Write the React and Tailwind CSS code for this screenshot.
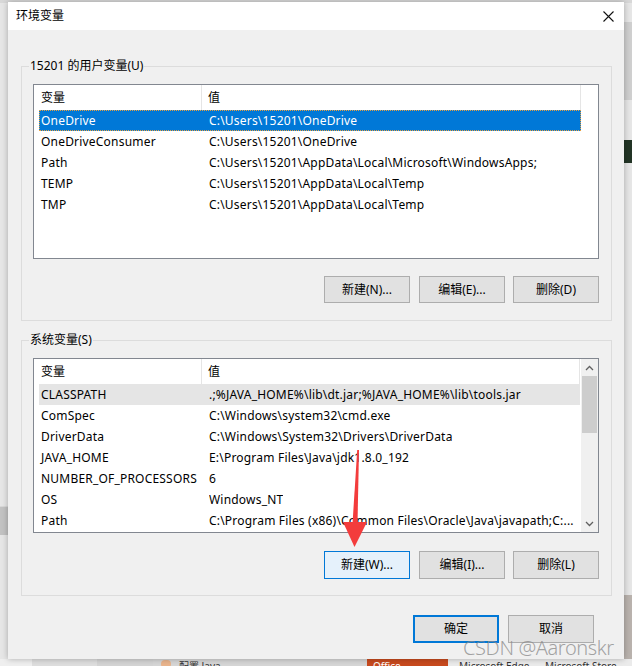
import React from "react";

const userVars = [
  ["OneDrive", "C:\\Users\\15201\\OneDrive"],
  ["OneDriveConsumer", "C:\\Users\\15201\\OneDrive"],
  ["Path", "C:\\Users\\15201\\AppData\\Local\\Microsoft\\WindowsApps;"],
  ["TEMP", "C:\\Users\\15201\\AppData\\Local\\Temp"],
  ["TMP", "C:\\Users\\15201\\AppData\\Local\\Temp"],
];

const sysVars = [
  ["CLASSPATH", ".;%JAVA_HOME%\\lib\\dt.jar;%JAVA_HOME%\\lib\\tools.jar"],
  ["ComSpec", "C:\\Windows\\system32\\cmd.exe"],
  ["DriverData", "C:\\Windows\\System32\\Drivers\\DriverData"],
  ["JAVA_HOME", "E:\\Program Files\\Java\\jdk1.8.0_192"],
  ["NUMBER_OF_PROCESSORS", "6"],
  ["OS", "Windows_NT"],
  ["Path", "C:\\Program Files (x86)\\Common Files\\Oracle\\Java\\javapath;C:..."],
];

function Button({ children, focused, primary, className = "" }) {
  let look = "bg-[#e1e1e1] border border-[#adadad]";
  if (focused) look = "bg-[#e5f1fb] border border-[#0078d7]";
  if (primary) look = "bg-[#e1e1e1] border-2 border-[#0078d7]";
  return (
    <div
      className={`w-[86px] h-[27px] flex items-center justify-center leading-none ${look} ${className}`}
    >
      {children}
    </div>
  );
}

function ListHeader({ valueWidth }) {
  return (
    <div className="flex h-[25px] items-center shrink-0">
      <div className="w-[168px] h-full pl-[7px] flex items-center border-r border-[#e5e5e5]">
        变量
      </div>
      <div
        className="h-full pl-[6px] flex items-center border-r border-[#e5e5e5]"
        style={{ width: valueWidth }}
      >
        值
      </div>
    </div>
  );
}

function Row({ name, value, variant, width }) {
  let look = "";
  if (variant === "selected")
    look = "bg-[#0078d7] text-white outline outline-1 outline-dotted outline-[#e8a040] -outline-offset-1";
  if (variant === "hover") look = "bg-[#e5e5e5]";
  return (
    <div
      className={`ml-[5px] h-[21px] flex items-center whitespace-nowrap tracking-[0.2px] ${look}`}
      style={{ width }}
    >
      <div className="w-[170px] pl-[2px] shrink-0">{name}</div>
      <div className="overflow-hidden">{value}</div>
    </div>
  );
}

function GroupBox({ title, className = "", children }) {
  return (
    <div className={`relative border border-[#dcdcdc] ${className}`}>
      <span className="absolute -top-[9px] left-[7px] bg-[#f0f0f0] px-[1px] leading-[16px]">
        {title}
      </span>
      {children}
    </div>
  );
}

function Chevron({ up }) {
  return (
    <svg width="9" height="6" viewBox="0 0 9 6" className="shrink-0">
      <path
        d={up ? "M1 5 L4.5 1.5 L8 5" : "M1 1 L4.5 4.5 L8 1"}
        fill="none"
        stroke="#606060"
        strokeWidth="1.3"
      />
    </svg>
  );
}

export default function App() {
  return (
    <div className="relative w-[632px] h-[666px] overflow-hidden bg-[#e6e6e6] text-[12px] text-black font-['Noto_Sans','Noto_Sans_CJK_SC',sans-serif]">
      {/* desktop behind the dialog */}
      <div className="absolute left-0 top-0 w-[632px] h-[3px] bg-[#d8d8d8]" />
      <div className="absolute left-0 top-[506px] w-[8px] h-[29px] bg-[#c2c2c2] border-t border-[#d8d8d8]" />
      <div className="absolute left-[624px] top-[22px] w-[8px] h-[78px] bg-[#cfcfcf]" />
      <div className="absolute left-[624px] top-[140px] w-[8px] h-[23px] bg-[#233526]" />
      <div className="absolute left-[624px] top-[595px] w-[8px] h-[71px] bg-[#b9b2ad]" />
      <div className="absolute left-0 top-[659px] w-[632px] h-[7px] flex text-[10px] leading-[12px] text-[#333]">
        <div className="w-[32px] bg-[#efefef]" />
        <div className="w-[65px] bg-[#dedede]" />
        <div className="w-[56px] bg-[#d4d4d4]" />
        <div className="w-[214px] bg-[#d6d6d6] flex items-start pt-[1px] pl-[8px] gap-[8px]">
          <span className="w-[10px] h-[8px] bg-[#e9b48c] rounded-sm" />
          <span>配置 Java</span>
        </div>
        <div className="w-[81px] bg-[#c84a1e] pl-[6px] text-white pt-[1px]">Office</div>
        <div className="flex-1 bg-[#ebebeb] flex pt-[1px] whitespace-nowrap">
          <span className="ml-[11px] w-[86px] overflow-hidden">Microsoft Edge</span>
          <span className="w-[80px] overflow-hidden">Microsoft Store</span>
        </div>
      </div>

      {/* environment variables dialog */}
      <div className="absolute left-[8px] top-[2px] w-[616px] h-[657px] bg-[#f0f0f0] shadow-[0_0_6px_rgba(0,0,0,0.28)] flex flex-col">
        <div className="h-[28px] bg-white flex items-center justify-between pl-[8px] pr-[10px] shrink-0">
          <span className="leading-none">环境变量</span>
          <svg width="11" height="11" viewBox="0 0 11 11">
            <path d="M0.5 0.5 L10.5 10.5 M10.5 0.5 L0.5 10.5" stroke="#111" strokeWidth="1.1" />
          </svg>
        </div>

        <div className="flex flex-col pl-[13px] pr-[12px] pt-[36px]">
          <GroupBox title="15201 的用户变量(U)" className="pl-[11px] pr-[12px] pt-[17px] pb-[17px]">
            <div className="h-[175px] bg-white border border-[#828790] flex flex-col">
              <ListHeader valueWidth={379} />
              {userVars.map(([n, v], i) => (
                <Row key={n} name={n} value={v} width={542} variant={i === 0 ? "selected" : ""} />
              ))}
            </div>
            <div className="flex justify-end mt-[17px]">
              <Button>新建(N)...</Button>
              <Button className="ml-[9px]">编辑(E)...</Button>
              <Button className="ml-[8px]">删除(D)</Button>
            </div>
          </GroupBox>

          <GroupBox title="系统变量(S)" className="mt-[19px] pl-[11px] pr-[12px] pt-[17px] pb-[16px]">
            <div className="h-[175px] bg-white border border-[#828790] flex">
              <div className="flex-1 flex flex-col min-w-0">
                <ListHeader valueWidth={378} />
                {sysVars.map(([n, v], i) => (
                  <Row key={n} name={n} value={v} width={541} variant={i === 0 ? "hover" : ""} />
                ))}
              </div>
              <div className="w-[17px] bg-[#f0f0f0] flex flex-col items-center shrink-0">
                <div className="h-[17px] flex items-center justify-center">
                  <Chevron up />
                </div>
                <div className="w-[15px] h-[57px] bg-[#cdcdcd]" />
                <div className="flex-1" />
                <div className="h-[17px] flex items-center justify-center">
                  <Chevron />
                </div>
              </div>
            </div>
            <div className="flex justify-end mt-[18px]">
              <Button focused className="h-[28px]">新建(W)...</Button>
              <Button className="ml-[9px] h-[28px]">编辑(I)...</Button>
              <Button className="ml-[8px] h-[28px]">删除(L)</Button>
            </div>
          </GroupBox>

          <div className="flex justify-end mt-[19px] pr-[18px]">
            <Button primary className="h-[28px]">确定</Button>
            <Button className="ml-[9px] h-[28px]">取消</Button>
          </div>
        </div>
      </div>

      {/* red annotation arrow */}
      <svg className="absolute left-0 top-0 pointer-events-none" width="632" height="666">
        <polygon points="357.2,450 359,450 357.5,524 352.5,524" fill="#f33c3c" />
        <polygon points="343,522 367,522 354.5,547" fill="#f33c3c" />
      </svg>

      {/* watermark */}
      <div className="absolute left-[463px] top-[635px] text-[20px] leading-[26px] tracking-[-0.4px] whitespace-nowrap text-[rgba(135,135,135,0.75)] font-['Noto_Sans',sans-serif] font-light">
        CSDN @Aaronskr
      </div>
    </div>
  );
}
